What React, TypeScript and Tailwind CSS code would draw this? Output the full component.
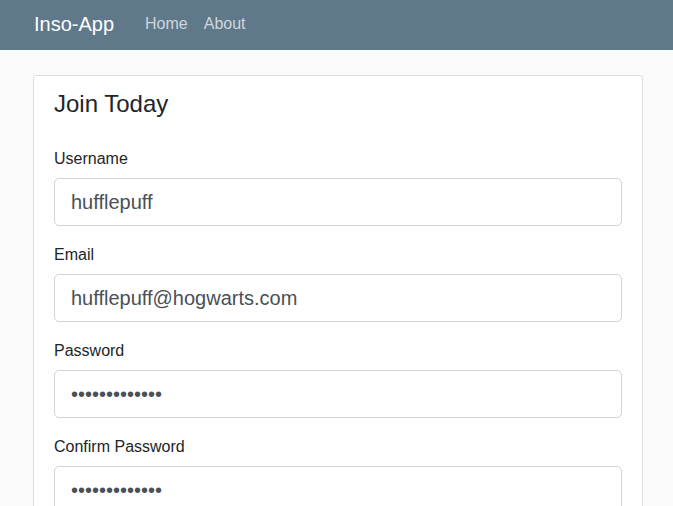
const fields = [
  { label: "Username", type: "text", value: "hufflepuff" },
  { label: "Email", type: "text", value: "hufflepuff@hogwarts.com" },
  { label: "Password", type: "password", value: "hufflepuff123" },
  { label: "Confirm Password", type: "password", value: "hufflepuff123" },
]

export default function App() {
  return (
    <div className="min-h-[506px] bg-[#fafafa] font-['Liberation_Sans',Arial,sans-serif] text-[#212529]">
      <nav className="flex h-[50px] items-center bg-[#5f788a] pb-[2px] pl-[34px]">
        <a href="#" className="mr-[31px] text-[20px] leading-[30px] text-white">
          Inso-App
        </a>
        <div className="flex gap-[16px] text-[16px] leading-[24px] text-[#cfd7dd]">
          <a href="#">Home</a>
          <a href="#">About</a>
        </div>
      </nav>
      <main className="pt-[25px] pl-[33px] pr-[30px]">
        <div className="rounded-[3px] border border-[#dddddd] bg-white px-[20px] pt-[10px] pb-[10px]">
          <h2 className="mb-[25px] text-[24px] leading-[36px]">Join Today</h2>
          {fields.map((f) => (
            <div key={f.label} className="mb-[17px]">
              <label className="mb-[7px] block text-[16px] leading-[24px]">{f.label}</label>
              <input
                type={f.type}
                readOnly
                defaultValue={f.value}
                className="block h-[48px] w-full rounded-[5px] border border-[#ced4da] bg-white px-[16px] text-[20px] text-[#495057] outline-none"
              />
            </div>
          ))}
        </div>
      </main>
    </div>
  )
}
